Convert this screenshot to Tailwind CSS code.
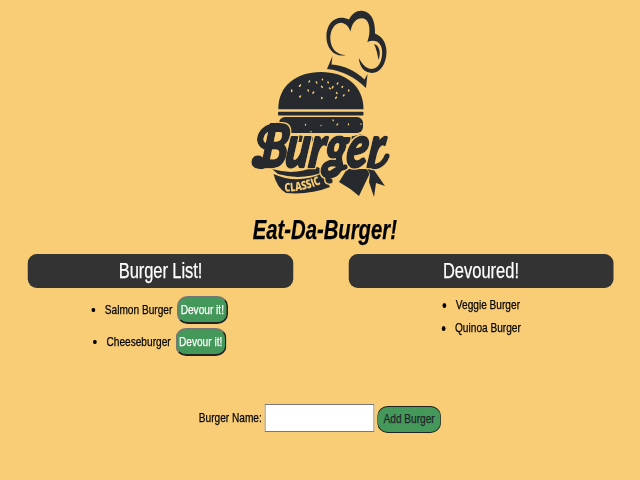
<!DOCTYPE html>
<html lang="en">
<head>
<meta charset="utf-8">
<title>Eat-Da-Burger!</title>
<script src="https://cdn.jsdelivr.net/npm/@tailwindcss/browser@4"></script>
</head>
<body class="bg-[#f9cd76] overflow-hidden">
<div class="w-[640px] h-[480px] overflow-hidden">
<div class="w-[853.33px] h-[480px] origin-top-left scale-x-75 flex flex-col overflow-hidden font-['Liberation_Sans',Arial,sans-serif] text-[13.5px] text-black [-webkit-text-stroke:0.25px]">
  <header class="h-[254px] shrink-0 flex flex-col items-center">
    <svg class="w-full h-[205px] shrink-0 [-webkit-text-stroke:0]" viewBox="0 0 640 205" preserveAspectRatio="none" fill="#262a2e">
      <defs>
        <filter id="outline" x="-10%" y="-10%" width="120%" height="120%">
          <feMorphology in="SourceAlpha" operator="dilate" radius="1.2" result="wide"/>
          <feFlood flood-color="#f9cd76"/>
          <feComposite in2="wide" operator="in" result="edge"/>
          <feMerge><feMergeNode in="edge"/><feMergeNode in="SourceGraphic"/></feMerge>
        </filter>
      </defs>
      <!-- chef hat -->
      <path d="M346 55C335 58 326.4 49 326.4 36.500C326.4 23 336 14 349 19.500C352 13.500 356.500 10.500 361.500 10.700C370 11 375.500 19 375 33.500C382 36 386.500 43 386.500 52C386.500 64 380 73 372 73C364 72.500 359.500 67 358.800 58C363 66 368 69.500 373 68.800C380 67.500 382.800 58 382 50C381 42 375 39 367.300 42C371 33 370.500 18.500 362 18.300C356 18.300 352 23 350.500 31.500C348.500 26 345 23 341 22.800C334 23 330 31 330.300 39C330.800 48 336 55 346 55Z"/>
      <path d="M374 44C379 45 381.500 52 378.500 60C377.500 54 376.500 49 374 44ZM332.500 56L331.500 64.500C344 65.500 355 70.500 364.500 79.500L367.500 74L366 88C355 77.500 343 70.500 327 69Z"/>
      <!-- bun and patty -->
      <path d="M278.300 109.300C278 86 296 72 321 72C346 72 363.500 86 363.500 109.300Z"/>
      <rect x="278" y="111.800" width="85.500" height="3.800" rx="1"/>
      <rect x="279" y="117" width="84" height="16" rx="6"/>
      <path d="M286 137Q296 133.500 307 137H326Q335 141 344 137Q353 137 362 134L354 142H288Z"/>
      <g stroke="#f9cd76" stroke-width="1.500" stroke-linecap="round">
        <path d="M291.700 90v1.400M300.500 85l-1 1.300M300.500 96l-.8 1M309.500 81l-.5 1M308 90l.4 1M313.700 92l-.8 1.200M316.300 82l.5 1M322.400 79.300v.5M321.600 86.400l.7 1M328 82l.3.8M321.800 97.400v1M329.500 88l.7.7M333 86.500l-.7 1.500M337.800 83l-.5 1M342.600 86.500l-.5.7M336.500 92.500l.5 1M348.700 90v1M344 95l-.5.8M336.400 97.200l-.8 1"/>
        <path d="M305.500 124.300v.7M333 120l.3.7M337.700 124l-.8.9M311 131.500v.3M321 125.500v.1M348.500 124v.8M361 124v.3" stroke-width="1.300"/>
      </g>
      <!-- lower band and ribbon -->
      <path d="M272 169Q296 176 315 166L326 171Q302 181 278 174Z"/>
      <path d="M273.500 174Q298 185 323 173L330 187Q310 195 286 193Q277 188 273.500 174Z"/>
      <path d="M347 169L367 169L369.500 174L359 196Q350 188 339 182Z"/>
      <path d="M367 168L374 170L385 186L376 183L374 197L369 182L370 174Z"/>
      <!-- lettering -->
      <g filter="url(#outline)" font-family="Lato, sans-serif" font-weight="900" font-style="italic" stroke="#262a2e" stroke-width="2.400" stroke-linejoin="round" stroke-linecap="round">
        <text transform="translate(260 167) skewX(-7) scale(.72 1)" font-size="59">B</text>
        <text transform="translate(284 167) skewX(-8)" font-size="58" textLength="98" lengthAdjust="spacingAndGlyphs">urger</text>
        <circle cx="258" cy="162" r="5.500"/>
        <path d="M258 165Q262 168 268 162M267 147C254 144 261 125 278 126" fill="none" stroke-width="6.500"/>
        <path d="M330 181C325 181 328 171 345 167M370 164C374 169 383 166 387 156" fill="none" stroke-width="5.500"/>
      </g>
      <path id="ribbonLine" d="M284.500 191.500Q304 192 323 183" fill="none"/>
      <text font-family="'Open Sans', sans-serif" font-weight="800" font-size="12" fill="#f9cd76"><textPath href="#ribbonLine" textLength="37.500" lengthAdjust="spacingAndGlyphs">CLASSIC</textPath></text>
    </svg>
    <h1 class="pt-[10px] pl-[13px] text-[27px] leading-[31px] font-bold italic whitespace-nowrap">Eat-Da-Burger!</h1>
  </header>
  <main class="h-[150px] shrink-0 pl-[37.33px] flex gap-[74px]">
    <section class="w-[353.33px]">
      <h2 class="h-[34px] rounded-[12px/9px] bg-[#333] text-white text-[22px] leading-[34px] text-center tracking-[-0.1px]">Burger List!</h2>
      <ul class="pt-[8px] pr-[2px] flex flex-col items-center gap-[4px]">
        <li class="flex items-center h-[28px]"><span class="size-[4.5px] rounded-full bg-black mr-[13px]"></span><span class="mr-[6px]">Salmon Burger</span><button class="w-[68px] h-[28px] rounded-[14px/10px] border-2 border-t-[#767676] border-l-[#767676] border-r-[#222] border-b-[#222] bg-[#449859] text-white whitespace-nowrap">Devour it!</button></li>
        <li class="flex items-center h-[28px]"><span class="size-[4.5px] rounded-full bg-black mr-[13px]"></span><span class="mr-[6px]">Cheeseburger</span><button class="w-[68px] h-[28px] rounded-[14px/10px] border-2 border-t-[#767676] border-l-[#767676] border-r-[#222] border-b-[#222] bg-[#449859] text-white whitespace-nowrap">Devour it!</button></li>
      </ul>
    </section>
    <section class="w-[353.33px]">
      <h2 class="h-[34px] rounded-[12px/9px] bg-[#333] text-white text-[22px] leading-[34px] text-center">Devoured!</h2>
      <ul class="pt-[6px] pl-[1px] flex flex-col items-center">
        <li class="flex items-center h-[23px]"><span class="size-[4.5px] rounded-full bg-black mr-[13px]"></span>Veggie Burger</li>
        <li class="flex items-center h-[23px]"><span class="size-[4.5px] rounded-full bg-black mr-[13px]"></span>Quinoa Burger</li>
      </ul>
    </section>
  </main>
  <form class="pl-[265px] flex items-start">
    <label for="name" class="w-[88px] h-[28px] leading-[28px] whitespace-nowrap">Burger Name:</label>
    <input id="name" class="w-[146px] h-[28px] bg-white border border-[#777]">
    <button type="button" class="ml-[4px] mt-[2px] w-[85px] h-[27px] rounded-[14px/10px] border border-[#222] bg-[#449859] text-[#212529] whitespace-nowrap">Add Burger</button>
  </form>
</div>
</div>
</body>
</html>
